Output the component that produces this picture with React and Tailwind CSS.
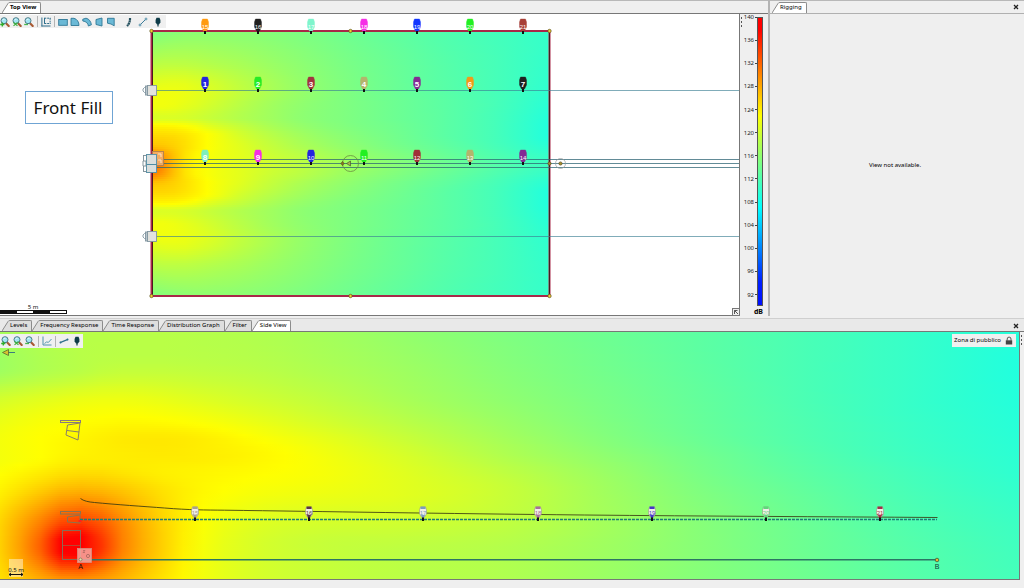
import React from "react";

/* ---------- level field helpers: 0 = cyan (108 dB), 1 = yellow (124 dB), 2 = red (140 dB) ---------- */
function hermite(xs, ys, x) {
  const n = xs.length;
  if (x <= xs[0]) return ys[0];
  if (x >= xs[n - 1]) return ys[n - 1];
  let i = 0;
  while (x > xs[i + 1]) i++;
  const slope = (k) => (ys[k + 1] - ys[k]) / (xs[k + 1] - xs[k]);
  const tangent = (k) => {
    if (k === 0) return slope(0);
    if (k === n - 1) return slope(n - 2);
    const a = slope(k - 1);
    const b = slope(k);
    if (a * b <= 0) return 0;
    const m = (a + b) / 2;
    const limit = 3 * Math.min(Math.abs(a), Math.abs(b));
    return Math.sign(m) * Math.min(Math.abs(m), limit);
  };
  const h = xs[i + 1] - xs[i];
  const t = (x - xs[i]) / h;
  const t2 = t * t;
  const t3 = t2 * t;
  return (
    (2 * t3 - 3 * t2 + 1) * ys[i] +
    (t3 - 2 * t2 + t) * h * tangent(i) +
    (-2 * t3 + 3 * t2) * ys[i + 1] +
    (t3 - t2) * h * tangent(i + 1)
  );
}

function levelColor(u) {
  const v = Math.max(0, Math.min(2, u));
  if (v <= 1) {
    const r = Math.round(v * 255);
    return `rgb(${r},255,${255 - r})`;
  }
  return `rgb(255,${Math.round((2 - v) * 255)},0)`;
}

const TOP_FIELD = {
  xs: [152, 165, 180, 195, 210, 240, 270, 300, 350, 400, 450, 500, 549],
  ys: [31, 60, 91, 103, 117, 125, 135, 145, 154, 163],
  v: [
    [0.5, 0.52, 0.54, 0.55, 0.55, 0.54, 0.52, 0.49, 0.43, 0.37, 0.31, 0.26, 0.21],
    [0.7, 0.72, 0.72, 0.71, 0.69, 0.65, 0.6, 0.55, 0.47, 0.4, 0.33, 0.27, 0.2],
    [0.93, 0.94, 0.93, 0.9, 0.86, 0.76, 0.67, 0.59, 0.49, 0.41, 0.34, 0.27, 0.18],
    [0.95, 0.95, 0.92, 0.88, 0.83, 0.73, 0.64, 0.57, 0.49, 0.42, 0.35, 0.27, 0.16],
    [0.85, 0.86, 0.85, 0.82, 0.78, 0.7, 0.63, 0.56, 0.49, 0.42, 0.35, 0.26, 0.14],
    [1.03, 1.03, 1.01, 0.96, 0.88, 0.77, 0.67, 0.59, 0.5, 0.43, 0.35, 0.26, 0.13],
    [1.15, 1.15, 1.12, 1.06, 0.99, 0.84, 0.73, 0.64, 0.53, 0.44, 0.35, 0.26, 0.13],
    [1.25, 1.22, 1.15, 1.07, 0.99, 0.88, 0.77, 0.68, 0.56, 0.46, 0.37, 0.27, 0.16],
    [1.5, 1.36, 1.16, 1.04, 0.97, 0.89, 0.8, 0.73, 0.6, 0.5, 0.4, 0.3, 0.2],
    [1.65, 1.42, 1.16, 1.03, 0.97, 0.89, 0.82, 0.75, 0.63, 0.53, 0.43, 0.33, 0.24],
  ],
};

const SIDE_FIELD = {
  xs: [0, 40, 60, 80, 100, 120, 160, 200, 260, 320, 400, 500, 600, 700, 800, 900, 1018],
  ys: [332, 365, 400, 420, 440, 455, 470, 490, 520, 545, 579],
  v: [
    [0.65, 0.7, 0.71, 0.72, 0.72, 0.72, 0.72, 0.71, 0.69, 0.65, 0.58, 0.5, 0.43, 0.36, 0.29, 0.22, 0.14],
    [0.62, 0.68, 0.7, 0.72, 0.74, 0.75, 0.75, 0.74, 0.72, 0.68, 0.62, 0.53, 0.45, 0.37, 0.29, 0.22, 0.13],
    [0.84, 0.89, 0.91, 0.93, 0.94, 0.94, 0.92, 0.88, 0.82, 0.76, 0.67, 0.57, 0.48, 0.39, 0.3, 0.22, 0.14],
    [0.92, 0.97, 0.98, 1.0, 1.01, 1.02, 1.01, 0.98, 0.91, 0.83, 0.73, 0.61, 0.5, 0.4, 0.31, 0.23, 0.15],
    [0.96, 1.0, 1.02, 1.04, 1.06, 1.08, 1.09, 1.07, 1.0, 0.92, 0.8, 0.66, 0.53, 0.42, 0.32, 0.24, 0.16],
    [0.96, 1.0, 1.03, 1.05, 1.06, 1.07, 1.08, 1.07, 1.03, 0.96, 0.85, 0.7, 0.57, 0.45, 0.34, 0.25, 0.17],
    [0.99, 1.06, 1.1, 1.12, 1.12, 1.1, 1.06, 1.04, 1.01, 0.97, 0.88, 0.75, 0.61, 0.47, 0.36, 0.27, 0.18],
    [1.05, 1.2, 1.28, 1.31, 1.29, 1.24, 1.12, 1.03, 0.97, 0.94, 0.89, 0.79, 0.64, 0.5, 0.39, 0.29, 0.2],
    [1.16, 1.48, 1.68, 1.75, 1.65, 1.47, 1.18, 1.0, 0.88, 0.84, 0.82, 0.76, 0.65, 0.53, 0.42, 0.32, 0.23],
    [1.18, 1.62, 2.03, 2.08, 1.82, 1.52, 1.2, 0.98, 0.84, 0.78, 0.75, 0.71, 0.63, 0.53, 0.43, 0.34, 0.25],
    [1.12, 1.32, 1.4, 1.42, 1.38, 1.3, 1.12, 0.96, 0.84, 0.78, 0.73, 0.69, 0.61, 0.52, 0.44, 0.35, 0.27],
  ],
};

function HeatMap({ id, field, x0, x1, y0, y1, mirror, samples }) {
  const rows = [];
  for (let y = y0; y < y1; y += 2) {
    const fy = mirror && y > mirror ? 2 * mirror - y : y;
    const line = field.xs.map((_, c) => hermite(field.ys, field.v.map((r) => r[c]), fy));
    const stops = [];
    for (let s = 0; s <= samples; s++) {
      const t = s / samples;
      stops.push([t, levelColor(hermite(field.xs, line, x0 + t * (x1 - x0)))]);
    }
    rows.push({ y, stops });
  }
  return (
    <g shapeRendering="crispEdges">
      <defs>
        {rows.map((r) => (
          <linearGradient key={r.y} id={`${id}-${r.y}`}>
            {r.stops.map(([t, c]) => (
              <stop key={t} offset={t} stopColor={c} />
            ))}
          </linearGradient>
        ))}
      </defs>
      {rows.map((r) => (
        <rect key={r.y} x={x0} y={r.y} width={x1 - x0} height={Math.min(2, y1 - r.y)} fill={`url(#${id}-${r.y})`} />
      ))}
    </g>
  );
}

/* ---------- microphones ---------- */
const MIC_X = [205, 258, 311, 364, 417, 470, 523];
const MIC_ROWS = [
  { foot: 34, first: 15, colors: ["#ff9a10", "#202020", "#7ff5cc", "#f52ee6", "#1236ff", "#22f022", "#a84038"] },
  { foot: 92, first: 1, colors: ["#2424e0", "#26ec26", "#a23440", "#b4b46c", "#842a94", "#f29a18", "#202020"] },
  { foot: 165, first: 8, colors: ["#7eeebc", "#f52ee6", "#2424e0", "#22f022", "#a03038", "#b4b46c", "#842a94"] },
];

function Mic({ x, foot, label, color }) {
  const y = foot - 15;
  return (
    <g>
      <path
        d={`M${x - 2.5} ${y}h5l1 3v5l-2 4h-3l-2-4v-5z`}
        fill={color}
        stroke={color}
        strokeOpacity="0.5"
        strokeWidth="0.8"
      />
      <rect x={x - 1} y={foot - 4} width="2" height="2" fill={color} />
      <rect x={x - 1} y={foot - 3} width="2" height="3" fill="#111111" />
      <text
        x={x}
        y={foot - 5}
        textAnchor="middle"
        fill="#ffffff"
        className={label > 9 ? "font-['Liberation_Sans'] text-[6px]" : "font-['Liberation_Sans'] text-[8px] font-bold"}
      >
        {label}
      </text>
    </g>
  );
}

const SIDE_MICS = [
  { x: 195, label: 15, color: "#a9a08c" },
  { x: 309, label: 16, color: "#5a3444" },
  { x: 423, label: 17, color: "#7c9cc0" },
  { x: 538, label: 18, color: "#a8709a" },
  { x: 652, label: 19, color: "#4636c8" },
  { x: 766, label: 20, color: "#5fd87a" },
  { x: 880, label: 21, color: "#a03048" },
];

function SideMic({ x, label, color }) {
  return (
    <g>
      <path d={`M${x - 2.5} 507h5l1 3v4l-2 3h-3l-2-3v-4z`} fill="#f0eee8" stroke="#8a8a7a" strokeWidth="0.5" />
      <rect x={x - 2.5} y="506.500" width="5" height="2.500" fill={color} />
      <path d={`M${x - 2} 515h4l-1 3h-2z`} fill={color} />
      <rect x={x - 1} y="517.500" width="2" height="3.500" fill="#111111" />
      <text x={x} y="515" textAnchor="middle" fill={color} className="font-['Liberation_Sans'] text-[6px]">
        {label}
      </text>
    </g>
  );
}

function Handle({ x, y }) {
  return <circle cx={x} cy={y} r="1.7" fill="#f4cc30" stroke="#5a5020" strokeWidth="0.7" />;
}

function Speaker({ y }) {
  return (
    <g stroke="#8296a0" strokeWidth="0.9">
      <path d={`M146 ${y - 2.5}h-1.500l-1.500 1.500v2l1.500 1.500h1.500`} fill="#ffffff" />
      <rect x="145.500" y={y - 4} width="2" height="9" fill="#b8c4ca" />
      <rect x="147.500" y={y - 4.5} width="9" height="10" fill="#e2e2de" />
    </g>
  );
}

/* ---------- toolbar icons ---------- */
function Svg({ children }) {
  return (
    <svg viewBox="0 0 10 10" className="block h-[10px] w-[10px]" fill="none" aria-hidden="true">
      {children}
    </svg>
  );
}

function Magnifier({ badge }) {
  return (
    <Svg>
      <path d="M5.800 6l2.900 3" stroke="#a85a34" strokeWidth="2.100" strokeLinecap="round" />
      <circle cx="4" cy="3.700" r="3" fill="#9fe4f2" stroke="#4c7c88" strokeWidth="1" />
      <path d="M2.500 3.200c.4-.8 1.100-1.200 2-1" stroke="#ffffff" strokeWidth=".9" />
      {badge === "in" && <path d="M2.300 5.400v4.200M.2 7.500h4.200" stroke="#2fae2a" strokeWidth="1.400" />}
      {badge === "fit" && <path d="M1.500 5.500l4 3.400M5.500 5.500l-4 3.400" stroke="#3fb040" strokeWidth="1.200" />}
      {badge === "out" && <path d="M.2 7.500h3.800" stroke="#46b850" strokeWidth="1.300" />}
    </Svg>
  );
}

const shape = { fill: "#6bb9d6", stroke: "#2f7896", strokeWidth: 0.9 };

const ICONS = {
  zoomIn: <Magnifier badge="in" />,
  zoomFit: <Magnifier badge="fit" />,
  zoomOut: <Magnifier badge="out" />,
  frame: (
    <Svg>
      <path d="M.9 .5v9M.5 9h9M3.500 .8v6" stroke="#2f6f8c" strokeWidth="1" />
      <path d="M3.500 1.200h6M3.500 6.500h6M9.100 1v6" stroke="#2f6f8c" strokeWidth="1" strokeDasharray="1.800 .9" />
    </Svg>
  ),
  rect: (
    <Svg>
      <rect x=".7" y="2.500" width="8.600" height="5.800" {...shape} />
    </Svg>
  ),
  arc: (
    <Svg>
      <path d="M1 1.300h3c3 .8 5 3.500 5 7.200H1z" {...shape} />
    </Svg>
  ),
  ring: (
    <Svg>
      <path d="M.8 2.200L4 1.200c3.200.6 5 3.500 5.400 6.600l-3 1.200C6.200 6.500 4 4.200.8 4z" {...shape} />
    </Svg>
  ),
  trapLeft: (
    <Svg>
      <path d="M2 2.500l6-1.500v8L2 7.500z" {...shape} />
    </Svg>
  ),
  trapRight: (
    <Svg>
      <path d="M1.500 1.300h6.700v7.500L5 7 1.500 6.200z" {...shape} />
    </Svg>
  ),
  array: (
    <Svg>
      <path d="M7 1c.2 3-.8 6-3 8" stroke="#24505e" strokeWidth="2.200" strokeDasharray="2 .4" />
    </Svg>
  ),
  line: (
    <Svg>
      <path d="M1.800 8.200l6.400-6.400" stroke="#3a7c9a" strokeWidth="1" />
      <circle cx="2" cy="8" r="1" stroke="#3a7c9a" fill="#cfe4ec" strokeWidth=".7" />
      <circle cx="8" cy="2" r="1" stroke="#3a7c9a" fill="#cfe4ec" strokeWidth=".7" />
    </Svg>
  ),
  lineFlat: (
    <Svg>
      <path d="M1 6.600l8-3.200" stroke="#2f6f8c" strokeWidth="1.200" />
      <circle cx="1.500" cy="6.500" r="1" fill="#2f6f8c" />
      <circle cx="8.500" cy="3.500" r="1" fill="#2f6f8c" />
    </Svg>
  ),
  mic: (
    <Svg>
      <path d="M3.500 .8h3l.9 2.200v2.500L5.800 7.800h-1.600L2.600 5.500V3z" fill="#0e3c48" />
      <path d="M5 7.500v2" stroke="#0e3c48" strokeWidth="1.200" />
    </Svg>
  ),
  axes: (
    <Svg>
      <path d="M1 .5v8.500h8.500" stroke="#3f86a4" strokeWidth=".9" />
      <path d="M2.500 7.500l2-1.500 2 .3L9.500 3" stroke="#4a90ac" strokeWidth=".9" />
    </Svg>
  ),
};

function Tool({ icon, label, className = "" }) {
  return (
    <button type="button" aria-label={label} className={`flex shrink-0 items-center ${className}`}>
      {ICONS[icon]}
    </button>
  );
}

function Separator() {
  return <span className="mx-px h-[11px] w-px shrink-0 bg-[#b4b4b4]" />;
}

/* ---------- tabs ---------- */
function Tab({ label, active, className = "" }) {
  const fill = active ? "#ffffff" : "#dedede";
  return (
    <button
      type="button"
      role="tab"
      aria-selected={!!active}
      className={`flex h-[11px] shrink-0 text-[6px] leading-[9px] text-black ${className}`}
    >
      <svg viewBox="0 0 8 11" className="block h-[11px] w-2 shrink-0" aria-hidden="true">
        <path d="M0 11L6 1.500Q6.500 .5 8 .5V11z" fill={fill} />
        <path d="M0 11L6 1.500Q6.500 .5 8 .5" fill="none" stroke="#8c8c8c" strokeWidth="1" />
      </svg>
      <span
        className={`h-[11px] rounded-tr-[2px] border-t border-r border-[#8c8c8c] pr-1 whitespace-nowrap ${
          active ? "bg-white" : "bg-[#dedede]"
        }`}
      >
        {label}
      </span>
    </button>
  );
}

function CloseButton() {
  return (
    <button type="button" aria-label="Close" className="mr-[5px] ml-auto flex h-3 w-[6px] shrink-0 items-center">
      <svg viewBox="0 0 6 6" className="block h-[6px] w-[6px]" aria-hidden="true">
        <path d="M1 1l4 4M5 1l-4 4" stroke="#222222" strokeWidth="1.300" />
      </svg>
    </button>
  );
}

function Grip() {
  return (
    <span className="flex flex-col gap-[2px]" aria-hidden="true">
      <span className="h-[2px] w-px bg-[#555555]" />
      <span className="h-[2px] w-px bg-[#555555]" />
      <span className="h-[2px] w-px bg-[#555555]" />
    </span>
  );
}

/* ---------- views ---------- */
function TopView() {
  return (
    <svg viewBox="0 14 739 301" className="block h-auto w-full" role="img" aria-label="Top view level map">
      <rect x="0" y="14" width="739" height="301" fill="#ffffff" />
      <HeatMap id="top" field={TOP_FIELD} x0={152} x1={549} y0={31} y1={296} mirror={163.5} samples={36} />

      <g fill="none">
        <rect x="151.500" y="31" width="398" height="265" stroke="#a82848" strokeWidth="2" />
        <path d="M152.500 32v263M549.500 32v263" stroke="#4a1a20" strokeWidth="1" />
      </g>

      <g stroke="#3c8094" strokeWidth="1" strokeOpacity="0.650" shapeRendering="crispEdges">
        <path d="M152 90.500h587M152 236.500h587" />
      </g>
      <g stroke="#2e6474" strokeWidth="1" strokeOpacity="0.750" shapeRendering="crispEdges">
        <path d="M152 159.500h587M152 163.500h587M152 167.500h587" />
      </g>

      {[151.5, 350.5, 549.5].map((x) => (
        <g key={x}>
          <Handle x={x} y={31} />
          <Handle x={x} y={296} />
        </g>
      ))}

      <Speaker y={90} />
      <Speaker y={236} />
      <rect x="152.500" y="151.500" width="11" height="14" fill="#f6b070" stroke="#b08050" strokeWidth="0.900" fillOpacity="0.850" />
      <path d="M158 154h3v3M158 160h3v3" stroke="#fbe2c4" fill="none" />
      <rect x="143.500" y="155.500" width="6" height="16" fill="#ffffff" stroke="#7a8c94" strokeWidth="0.900" />
      <path d="M143 161h3v5h-3z" fill="#ffffff" stroke="#7a8c94" strokeWidth="0.900" />
      <rect x="146.500" y="154.500" width="10" height="18" fill="#dadedd" stroke="#5f93a8" strokeWidth="1" />
      <path d="M147 164.500h10" stroke="#4f8ca4" />

      <circle cx="350.500" cy="163.500" r="8" fill="none" stroke="#6a8a40" strokeWidth="0.800" />
      <path d="M346.500 163.500l4-2.500v5z" fill="#a8b050" stroke="#4a5a30" strokeWidth="0.700" />
      <path d="M342.500 161.500l1.500 2-1.500 2-1.500-2z" fill="#907820" stroke="#5a4a18" strokeWidth="0.700" />
      <circle cx="549.500" cy="163.500" r="1.600" fill="#a89030" stroke="#5a4a20" strokeWidth="0.700" />
      <circle cx="560.500" cy="163.500" r="5" fill="none" stroke="#9a9a9a" strokeWidth="0.700" />
      <circle cx="560.500" cy="163.500" r="1.600" fill="#a89030" stroke="#5a4a20" strokeWidth="0.700" />

      {MIC_ROWS.map((row) =>
        MIC_X.map((x, i) => (
          <Mic key={row.first + i} x={x} foot={row.foot} label={row.first + i} color={row.colors[i]} />
        ))
      )}

      <rect x="25.500" y="91.500" width="87" height="32" fill="#ffffff" stroke="#6fa4d4" strokeWidth="1" />
      <text x="68" y="114" textAnchor="middle" fill="#111111" className="font-['Noto_Sans'] text-[17px]">
        Front Fill
      </text>

      <text x="33" y="309" textAnchor="middle" fill="#111111" className="font-['Noto_Sans'] text-[6px]">
        5 m
      </text>
      <rect x="-1" y="310.500" width="67.500" height="3" fill="#ffffff" stroke="#111111" strokeWidth="1" />
      <path d="M0 310h17v4H0zM33 310h17v4H33z" fill="#111111" />
    </svg>
  );
}

function SideView() {
  return (
    <svg viewBox="0 332 1019 247" className="block h-auto w-full" role="img" aria-label="Side view level map">
      <HeatMap id="side" field={SIDE_FIELD} x0={0} x1={1019} y0={332} y1={579} samples={50} />

      <path d="M6 352.500h9" stroke="#3c7c80" strokeWidth="1" />
      <path d="M2.500 352.500l6-3v6z" fill="#d8c030" stroke="#5a6a30" strokeWidth="0.800" />

      <g fill="none" stroke="#8a7f68" strokeWidth="1">
        <rect x="60.500" y="420.500" width="20" height="2" stroke="#8a7a80" />
        <path d="M67.500 425l12.500-2-2 17-12-5z" />
        <path d="M67 430.500l12 1.500" />
      </g>
      <g fill="none" stroke="#8a7450" strokeWidth="1">
        <rect x="60.500" y="511.500" width="20" height="2.500" />
        <path d="M67.500 517l12.500-2v8l-12.500-1z" />
        <rect x="62.500" y="530.500" width="18" height="29" stroke="#8a6a58" />
        <path d="M62.500 545.500h18" strokeOpacity="0.600" />
      </g>

      <path
        d="M80.500 498.500c3 2.500 8 3.500 14 4 20 2 50 4 70 5.500 25 2 40 2 60 2.200 100 1.300 210 3.300 360 4.800 120 1.200 240 1.700 353 2.500"
        fill="none"
        stroke="#3a3a10"
        strokeOpacity="0.850"
        strokeWidth="1"
      />
      <path d="M80 519.500h857" stroke="#1e7c78" strokeWidth="1.400" strokeDasharray="3 1" />
      <path d="M80 559.800h857" stroke="#2c7464" strokeWidth="1.400" />
      <rect x="78.500" y="520" width="3" height="2" fill="#ff2020" />

      {SIDE_MICS.map((m) => (
        <SideMic key={m.label} {...m} />
      ))}

      <rect x="77.500" y="548.500" width="14" height="14" fill="#f6a8a0" fillOpacity="0.850" stroke="#d89080" strokeWidth="0.800" />
      <circle cx="88" cy="556" r="1.600" fill="none" stroke="#9a6058" strokeWidth="0.700" />
      <path d="M83 550.500h2l-2 2h2" fill="none" stroke="#9a6058" strokeWidth="0.600" />
      <circle cx="80.500" cy="559.500" r="1.500" fill="#e8e0b0" stroke="#7a7050" strokeWidth="0.700" />
      <text x="80.500" y="569" textAnchor="middle" fill="#111111" className="font-['Liberation_Sans'] text-[7px]">
        A
      </text>
      <circle cx="937" cy="560" r="1.800" fill="#f0b830" stroke="#3a5a40" strokeWidth="0.800" />
      <text x="937" y="569" textAnchor="middle" fill="#104038" className="font-['Liberation_Sans'] text-[7px]">
        B
      </text>

      <rect x="9" y="559" width="14" height="18" fill="#ffffff" fillOpacity="0.450" />
      <text x="16" y="572" textAnchor="middle" fill="#111111" className="font-['Noto_Sans'] text-[6px]">
        0.5 m
      </text>
      <path d="M9 574.500h14M11 573l-2 1.500 2 1.500M21 573l2 1.500-2 1.500" fill="none" stroke="#111111" strokeWidth="1" />
    </svg>
  );
}

const LEVELS = [140, 136, 132, 128, 124, 120, 116, 112, 108, 104, 100, 96];

function LevelScale() {
  return (
    <div className="flex w-7 shrink-0 flex-col pt-[3px]">
      <div className="flex flex-1">
        <div className="w-[3px] shrink-0 pl-px">
          <Grip />
        </div>
        <div className="flex flex-1 flex-col text-right text-[6px] leading-[8px] text-[#222222]">
          {LEVELS.map((l) => (
            <div key={l} className="min-h-0 flex-[4_1_0px]">
              <div className="-mt-1 flex h-2 items-center justify-end gap-px">
                {l}
                <span className="h-px w-[2px] bg-[#444444]" />
              </div>
            </div>
          ))}
          <div className="min-h-0 flex-[2_1_0px]">
            <div className="-mt-1 flex h-2 items-center justify-end gap-px">
              92
              <span className="h-px w-[2px] bg-[#444444]" />
            </div>
          </div>
        </div>
        <div className="mr-[5px] w-[6px] shrink-0 border border-[#555555] bg-[linear-gradient(to_bottom,#ff0000_0%,#ff0000_4%,#ffff00_34%,#00ffff_66%,#0020ff_92%,#0010ff_100%)]" />
      </div>
      <p className="h-[10px] pr-[5px] text-right text-[7px] leading-[12px] font-bold text-black">dB</p>
    </div>
  );
}

export default function App() {
  return (
    <div className="flex min-h-screen flex-col bg-[#efefef] font-['Noto_Sans',sans-serif] text-black">
      <div className="flex">
        <section className="min-w-0 flex-1" aria-label="Top View">
          <div role="tablist" className="flex h-[14px] items-end border-t border-b border-t-[#b8b8b8] border-b-[#777777] pl-[2px]">
            <Tab label="Top View" active className="font-bold" />
          </div>
          <div className="flex">
            <div className="relative min-w-0 flex-1 border-r border-b border-[#777777]">
              <TopView />
              <div className="absolute top-px left-0 flex h-[13px] items-center gap-[2px] bg-[#f0f0f0] pr-[3px]">
                <Tool icon="zoomIn" label="Zoom in" />
                <Tool icon="zoomFit" label="Zoom to fit" />
                <Tool icon="zoomOut" label="Zoom out" />
                <Separator />
                <Tool icon="frame" label="Select area" />
                <Separator />
                <Tool icon="rect" label="Rectangle" />
                <Tool icon="arc" label="Arc" />
                <Tool icon="ring" label="Ring" />
                <Tool icon="trapLeft" label="Trapezoid left" />
                <Tool icon="trapRight" label="Trapezoid right" />
                <Tool icon="array" label="Line array" className="ml-[5px]" />
                <Tool icon="line" label="Line" className="ml-[3px]" />
                <Tool icon="mic" label="Microphone" className="ml-[3px]" />
              </div>
              <button
                type="button"
                aria-label="Go to origin"
                className="absolute right-0 bottom-0 flex h-[7px] w-[7px] items-center justify-center border-t border-l border-[#777777] bg-[#efefef]"
              >
                <svg viewBox="0 0 6 6" className="block h-[6px] w-[6px] shrink-0" aria-hidden="true">
                  <path d="M1.500 5V1.500H4.500M1.500 1.500l3.500 3.500" fill="none" stroke="#444444" strokeWidth=".9" />
                </svg>
              </button>
            </div>
            <LevelScale />
          </div>
        </section>

        <section className="flex w-1/4 shrink-0 flex-col border-l-2 border-[#b4b4b4]" aria-label="Rigging">
          <div role="tablist" className="flex h-[14px] items-end border-t border-b border-t-[#b8b8b8] border-b-[#b0b0b0]">
            <Tab label="Rigging" active className="ml-[2px]" />
            <CloseButton />
          </div>
          <div className="flex flex-1 items-center justify-center pr-1 text-[6px]">View not available.</div>
        </section>
      </div>

      <section className="mt-[2px] border-t border-[#cfcfcf] bg-[#efefef]" aria-label="Side View">
        <div role="tablist" className="flex h-[13px] items-start border-b border-[#777777] bg-[#e9e9e9] pt-px pl-[2px]">
          <Tab label="Levels" />
          <Tab label="Frequency Response" />
          <Tab label="Time Response" />
          <Tab label="Distribution Graph" />
          <Tab label="Filter" />
          <Tab label="Side View" active />
          <CloseButton />
        </div>
        <div className="flex">
          <div className="relative min-w-0 flex-1 border-r border-b border-[#777777]">
            <SideView />
            <div className="absolute top-[2px] left-0 flex h-[14px] items-center gap-[2px] bg-[#f0f0f0] pr-px pl-px">
              <Tool icon="zoomIn" label="Zoom in" />
              <Tool icon="zoomFit" label="Zoom to fit" />
              <Tool icon="zoomOut" label="Zoom out" />
              <Separator />
              <Tool icon="axes" label="Axes" />
              <Separator />
              <Tool icon="lineFlat" label="Line" />
              <Tool icon="mic" label="Microphone" className="ml-px" />
            </div>
            <button
              type="button"
              className="absolute top-[2px] right-[3px] flex h-[13px] items-center gap-1 bg-[#f0f0f0] pr-[3px] pl-[2px] text-[6px] text-black"
            >
              Zona di pubblico
              <svg viewBox="0 0 8 9" className="block h-[9px] w-2" aria-hidden="true">
                <path d="M2.200 4.500V3a1.900 1.900 0 0 1 3.800 0v1.500" fill="none" stroke="#555555" strokeWidth="1" />
                <rect x=".8" y="4.300" width="6.400" height="4.200" fill="#444444" />
              </svg>
            </button>
          </div>
          <div className="w-1 shrink-0 pt-[3px] pl-px">
            <Grip />
          </div>
        </div>
      </section>
    </div>
  );
}
